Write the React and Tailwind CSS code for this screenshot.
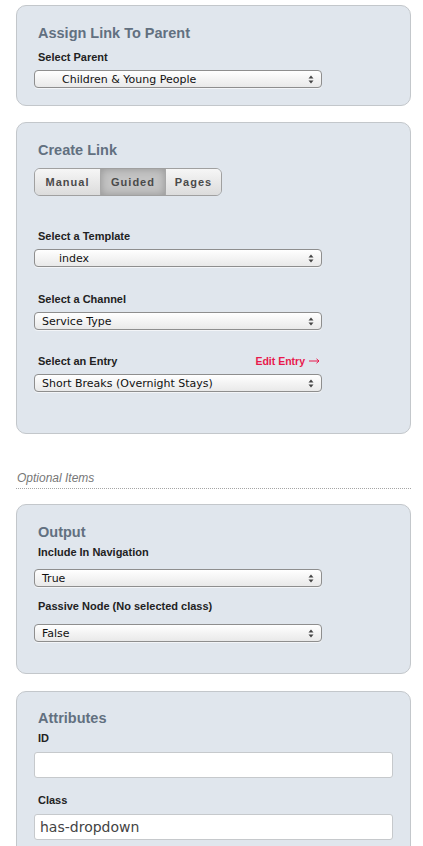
import React from 'react';

const font = { fontFamily: '"Liberation Sans", Arial, sans-serif' };

function Arrows() {
  return (
    <svg width="6" height="9" viewBox="0 0 6 9" className="shrink-0">
      <path d="M3 0.5 L5.5 3.5 L0.5 3.5 Z" fill="#444" />
      <path d="M3 8.5 L5.5 5.5 L0.5 5.5 Z" fill="#444" />
    </svg>
  );
}

function Select({ value, indent = 'pl-[7px]' }) {
  return (
    <div className="flex h-[18px] w-[288px] items-center justify-between rounded-[4px] border border-[#8e8e8e] bg-gradient-to-b from-white to-[#e9e9e9] pr-[7px] shadow-[0_1px_0_rgba(255,255,255,0.6)]">
      <span className={`leading-none text-[#111] ${indent}`} style={{ fontFamily: '"DejaVu Sans", "Liberation Sans", sans-serif', fontSize: '11px' }}>
        {value}
      </span>
      <Arrows />
    </div>
  );
}

function Label({ children, className = '' }) {
  return <div className={`pl-[4px] text-[11px] font-bold leading-[14px] text-[#222] ${className}`}>{children}</div>;
}

function Title({ children }) {
  return <h2 className="pl-[4px] text-[14.5px] font-bold leading-[20px] text-[#627080]">{children}</h2>;
}

function Panel({ children, className = '' }) {
  return (
    <section className={`rounded-[10px] border border-[#c3c7cb] bg-[#e0e6ed] px-[17px] ${className}`}>
      {children}
    </section>
  );
}

function Input({ value }) {
  return (
    <div className="flex h-[26px] w-[359px] items-center rounded-[3px] border border-[#c6c9cc] bg-white pl-[5px]">
      <span className="text-[#444]" style={{ fontFamily: '"DejaVu Sans", sans-serif', fontSize: '14px' }}>{value}</span>
    </div>
  );
}

export default function App() {
  return (
    <div className="min-h-[846px] bg-white pl-4 pr-3 pt-[5px]" style={font}>
      <Panel className="pt-[17px] pb-[17px]">
        <Title>Assign Link To Parent</Title>
        <Label className="mt-[7px]">Select Parent</Label>
        <div className="mt-[6px]">
          <Select value="Children & Young People" indent="pl-[27px]" />
        </div>
      </Panel>

      <Panel className="mt-4 pt-[17px] pb-[41px]">
        <Title>Create Link</Title>
        <div className="mt-[8px] flex h-[28px] w-[188px] overflow-hidden rounded-[6px] border border-[#a0a0a0] text-[11px] font-bold tracking-[1px] text-[#4a4a4a]">
          <div className="flex w-[65px] items-center justify-center bg-gradient-to-b from-[#f6f6f6] to-[#dcdcdc]">Manual</div>
          <div className="flex w-[66px] items-center justify-center border-x border-[#a8a8a8] bg-[#c4c4c4] shadow-[inset_0_0_8px_rgba(0,0,0,0.25)]">Guided</div>
          <div className="flex flex-1 items-center justify-center bg-gradient-to-b from-[#f6f6f6] to-[#dcdcdc]">Pages</div>
        </div>
        <Label className="mt-[33px]">Select a Template</Label>
        <div className="mt-[6px]">
          <Select value="index" indent="pl-[24px]" />
        </div>
        <Label className="mt-[25px]">Select a Channel</Label>
        <div className="mt-[6px]">
          <Select value="Service Type" />
        </div>
        <div className="mt-[24px] flex w-[288px] items-center justify-between">
          <Label>Select an Entry</Label>
          <span className="flex items-center gap-[4px] pr-[2px] text-[10.5px] font-bold leading-[14px] text-[#e8194c]">
            Edit Entry
            <svg width="11" height="6" viewBox="0 0 11 6">
              <path d="M0 3 H10 M7.5 0.8 L10 3 L7.5 5.2" stroke="#e8194c" strokeWidth="1" fill="none" />
            </svg>
          </span>
        </div>
        <div className="mt-[6px]">
          <Select value="Short Breaks (Overnight Stays)" />
        </div>
      </Panel>

      <div className="mt-[37px] border-b border-dotted border-[#a5a5a5] pb-[3px] pl-[1px] text-[12px] italic leading-[14px] text-[#777]">
        Optional Items
      </div>

      <Panel className="mt-[15px] pt-[17px] pb-[31px]">
        <Title>Output</Title>
        <Label className="mt-[3px]">Include In Navigation</Label>
        <div className="mt-[10px]">
          <Select value="True" />
        </div>
        <Label className="mt-[12px]">Passive Node (No selected class)</Label>
        <div className="mt-[11px]">
          <Select value="False" />
        </div>
      </Panel>

      <Panel className="mt-[17px] pt-[16px] pb-[20px]">
        <Title>Attributes</Title>
        <Label className="mt-[3px]">ID</Label>
        <div className="mt-[7px]">
          <Input value="" />
        </div>
        <Label className="mt-[15px]">Class</Label>
        <div className="mt-[7px]">
          <Input value="has-dropdown" />
        </div>
      </Panel>
    </div>
  );
}
